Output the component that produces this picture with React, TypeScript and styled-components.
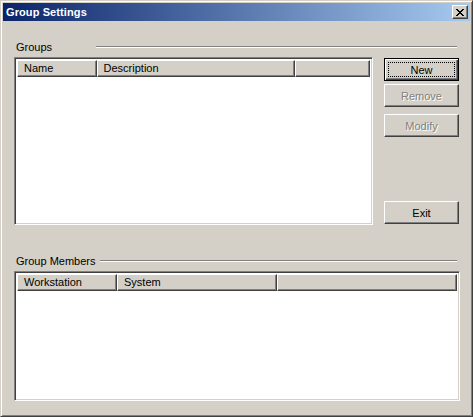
import React from "react";
import styled, { createGlobalStyle, css } from "styled-components";

const Global = createGlobalStyle`
  html, body { margin: 0; padding: 0; background: #d4d0c8; }
  body { font-family: "Liberation Sans", Arial, sans-serif; font-size: 11px; }
  * { box-sizing: border-box; }
`;

const raised = css`
  border-style: solid;
  border-width: 1px;
  border-color: #ffffff #404040 #404040 #ffffff;
  box-shadow: inset -1px -1px 0 #808080, inset 1px 1px 0 #d4d0c8;
`;

const Window = styled.div`
  width: 473px;
  height: 417px;
  background: #d4d0c8;
  border-style: solid;
  border-width: 1px;
  border-color: #d4d0c8 #404040 #404040 #d4d0c8;
  box-shadow: inset 1px 1px 0 #ffffff, inset -1px -1px 0 #808080;
  padding: 2px;
  display: flex;
  flex-direction: column;
`;

const TitleBar = styled.div`
  height: 18px;
  background: linear-gradient(to right, #0a246a, #a6caf0);
  display: flex;
  align-items: center;
  justify-content: space-between;
  padding: 0 2px 0 3px;
`;

const Title = styled.span`
  color: #ffffff;
  font-weight: bold;
  font-size: 11px;
  letter-spacing: 0.1px;
`;

const CloseButton = styled.div`
  width: 16px;
  height: 14px;
  background: #d4d0c8;
  ${raised};
  display: flex;
  align-items: center;
  justify-content: center;
`;

const Body = styled.div`
  flex: 1;
  padding: 19px 10px 0 11px;
  display: flex;
  flex-direction: column;
`;

const SectionHeader = styled.div`
  height: 14px;
  display: flex;
  align-items: center;
`;

const SectionLabel = styled.span`
  min-width: 82px;
  padding: 0 5px 0 2px;
  color: #000;
  white-space: nowrap;
`;

const Etched = styled.div`
  flex: 1;
  height: 2px;
  margin-right: 3px;
  border-top: 1px solid #808080;
  border-bottom: 1px solid #ffffff;
`;

const TopRow = styled.div`
  display: flex;
  margin-top: 3px;
  gap: 11px;
`;

const ListView = styled.div<{ $w?: number; $h: number }>`
  width: ${(p) => (p.$w ? `${p.$w}px` : "100%")};
  height: ${(p) => p.$h}px;
  background: #ffffff;
  border-style: solid;
  border-width: 1px;
  border-color: #808080 #ffffff #ffffff #808080;
  box-shadow: inset 1px 1px 0 #404040, inset -1px -1px 0 #d4d0c8;
  padding: 2px;
  display: flex;
  flex-direction: column;
`;

const Header = styled.div`
  display: flex;
  height: 17px;
`;

const HeaderCell = styled.div<{ $w?: number }>`
  ${(p) => (p.$w ? `width: ${p.$w}px;` : "flex: 1;")}
  height: 17px;
  background: #d4d0c8;
  ${raised};
  padding: 1px 0 0 6px;
  line-height: 13px;
  white-space: nowrap;
  overflow: hidden;
`;

const ButtonColumn = styled.div`
  width: 75px;
  display: flex;
  flex-direction: column;
`;

const Button = styled.div<{ $default?: boolean; $disabled?: boolean; $top: number }>`
  height: 23px;
  margin-top: ${(p) => p.$top}px;
  background: #d4d0c8;
  display: flex;
  align-items: center;
  justify-content: center;
  position: relative;
  color: ${(p) => (p.$disabled ? "#808080" : "#000")};
  text-shadow: ${(p) => (p.$disabled ? "1px 1px 0 #ffffff" : "none")};
  ${(p) =>
    p.$default
      ? css`
          border: 1px solid #000;
          box-shadow: inset 1px 1px 0 #ffffff, inset -1px -1px 0 #404040,
            inset -2px -2px 0 #808080;
        `
      : raised}
`;

const Focus = styled.div`
  position: absolute;
  inset: 3px;
  border: 1px dotted #000;
`;

const MembersHeader = styled(SectionHeader)`
  margin-top: 29px;
`;

const Bottom = styled.div`
  margin-top: 3px;
`;

const CloseIcon = () => (
  <svg width="8" height="7" viewBox="0 0 8 7" shapeRendering="crispEdges">
    <path
      d="M0 0h2v1h-2zM6 0h2v1h-2zM1 1h2v1h-2zM5 1h2v1h-2zM2 2h4v1h-4zM3 3h2v1h-2zM2 4h4v1h-4zM1 5h2v1h-2zM5 5h2v1h-2zM0 6h2v1h-2zM6 6h2v1h-2z"
      fill="#000"
    />
  </svg>
);

export default function App() {
  return (
    <>
      <Global />
      <Window>
        <TitleBar>
          <Title>Group Settings</Title>
          <CloseButton>
            <CloseIcon />
          </CloseButton>
        </TitleBar>
        <Body>
          <SectionHeader>
            <SectionLabel>Groups</SectionLabel>
            <Etched />
          </SectionHeader>
          <TopRow>
            <ListView $w={359} $h={168}>
              <Header>
                <HeaderCell $w={80}>Name</HeaderCell>
                <HeaderCell $w={200}>Description</HeaderCell>
                <HeaderCell $w={75} />
              </Header>
            </ListView>
            <ButtonColumn>
              <Button $default $top={1}>
                New
                <Focus />
              </Button>
              <Button $disabled $top={3}>
                Remove
              </Button>
              <Button $disabled $top={7}>
                Modify
              </Button>
              <Button $top={64}>Exit</Button>
            </ButtonColumn>
          </TopRow>
          <MembersHeader>
            <SectionLabel>Group Members</SectionLabel>
            <Etched />
          </MembersHeader>
          <Bottom>
            <ListView $h={130}>
              <Header>
                <HeaderCell $w={100}>Workstation</HeaderCell>
                <HeaderCell $w={160}>System</HeaderCell>
                <HeaderCell />
              </Header>
            </ListView>
          </Bottom>
        </Body>
      </Window>
    </>
  );
}
